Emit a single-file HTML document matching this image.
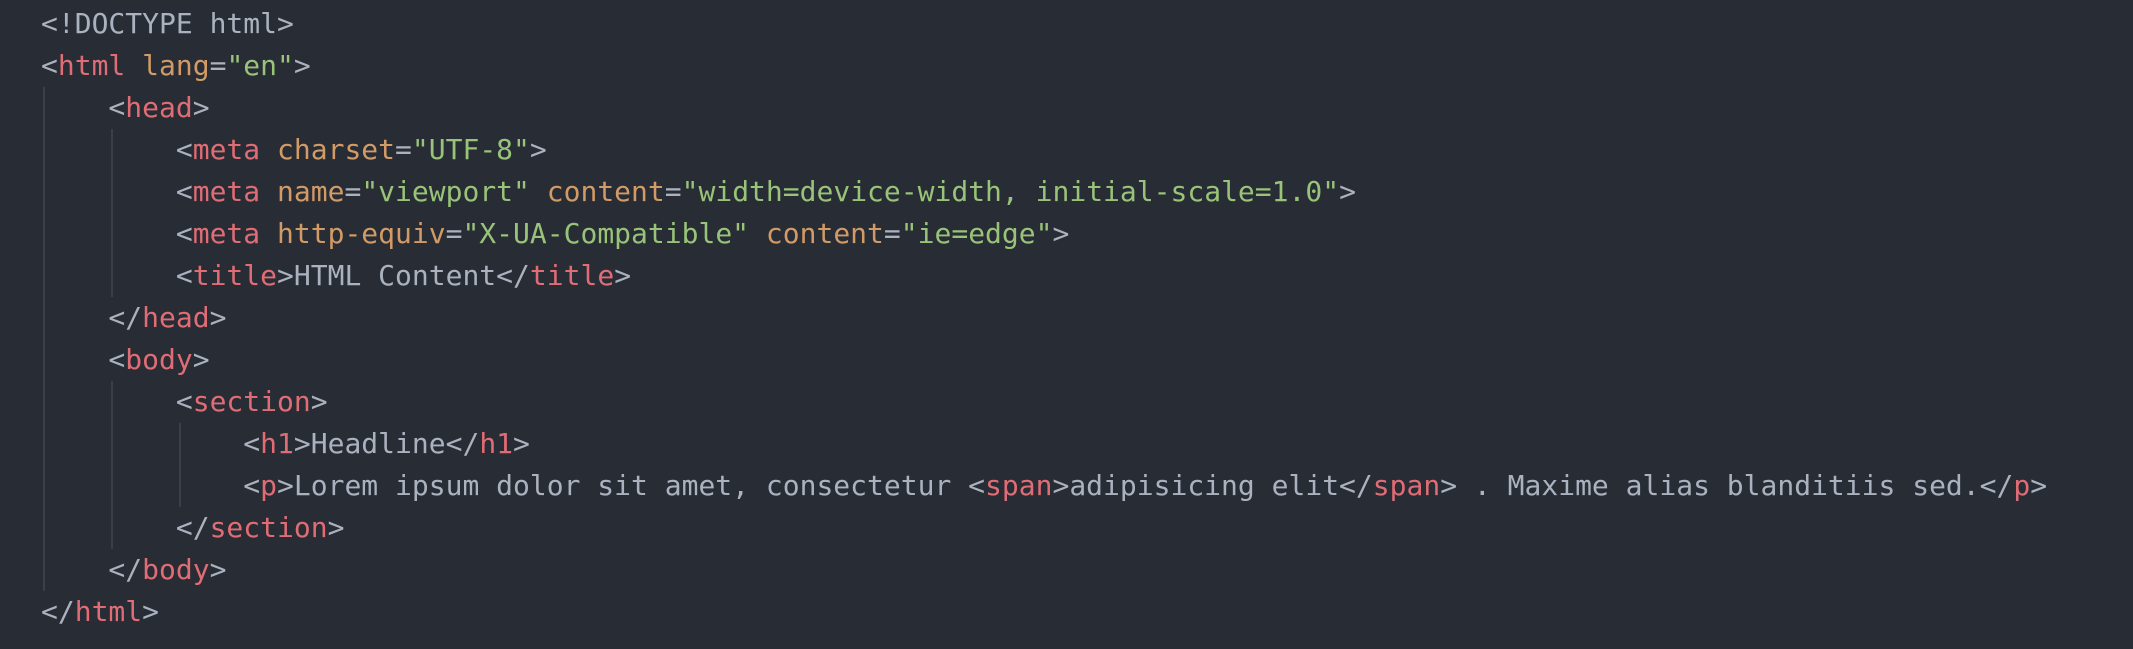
<!DOCTYPE html>
<html><head><style>
body{margin:0;width:2133px;height:649px;background:#282c34;overflow:hidden;position:relative}
pre{margin:0;position:absolute;left:41px;top:3px;font-family:"DejaVu Sans Mono","Liberation Mono",monospace;font-size:28px;line-height:42px;color:#abb2bf}
.t{color:#e06c75}.a{color:#d19a66}.s{color:#98c379}
.g{position:absolute;width:2px;background:#3b4048}
</style></head><body>
<div class="g" style="left:43px;top:87px;height:504px"></div>
<div class="g" style="left:111px;top:129px;height:168px"></div>
<div class="g" style="left:111px;top:381px;height:168px"></div>
<div class="g" style="left:179px;top:423px;height:84px"></div>
<pre>&lt;!DOCTYPE html&gt;
&lt;<span class="t">html</span> <span class="a">lang</span>=<span class="s">"en"</span>&gt;
    &lt;<span class="t">head</span>&gt;
        &lt;<span class="t">meta</span> <span class="a">charset</span>=<span class="s">"UTF-8"</span>&gt;
        &lt;<span class="t">meta</span> <span class="a">name</span>=<span class="s">"viewport"</span> <span class="a">content</span>=<span class="s">"width=device-width, initial-scale=1.0"</span>&gt;
        &lt;<span class="t">meta</span> <span class="a">http-equiv</span>=<span class="s">"X-UA-Compatible"</span> <span class="a">content</span>=<span class="s">"ie=edge"</span>&gt;
        &lt;<span class="t">title</span>&gt;HTML Content&lt;/<span class="t">title</span>&gt;
    &lt;/<span class="t">head</span>&gt;
    &lt;<span class="t">body</span>&gt;
        &lt;<span class="t">section</span>&gt;
            &lt;<span class="t">h1</span>&gt;Headline&lt;/<span class="t">h1</span>&gt;
            &lt;<span class="t">p</span>&gt;Lorem ipsum dolor sit amet, consectetur &lt;<span class="t">span</span>&gt;adipisicing elit&lt;/<span class="t">span</span>&gt; . Maxime alias blanditiis sed.&lt;/<span class="t">p</span>&gt;
        &lt;/<span class="t">section</span>&gt;
    &lt;/<span class="t">body</span>&gt;
&lt;/<span class="t">html</span>&gt;</pre>
</body></html>
